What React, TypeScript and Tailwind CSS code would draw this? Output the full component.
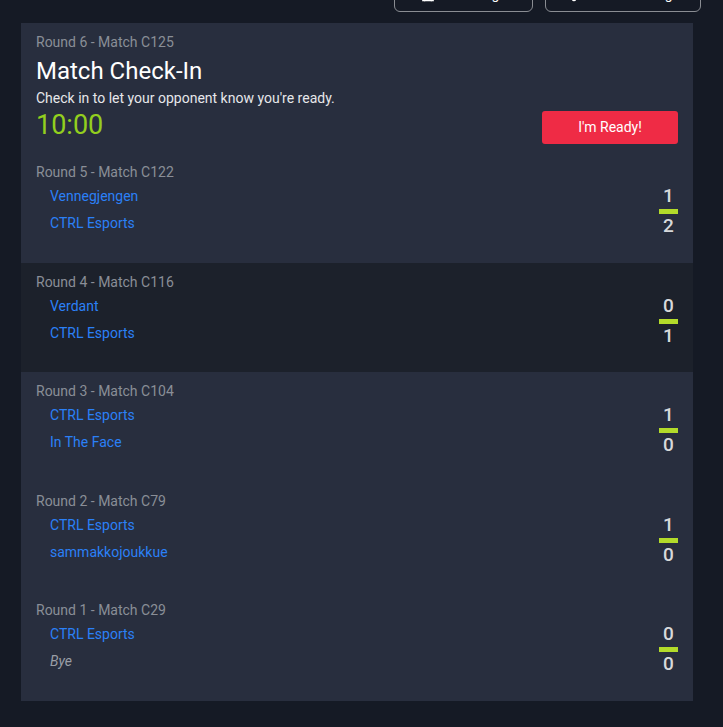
import { Settings, Trophy } from 'lucide-react'

interface Match {
  round: number
  code: string
  teams: { name: string; bye?: boolean }[]
  scores: [number, number]
  dark?: boolean
}

const matches: Match[] = [
  { round: 5, code: 'C122', teams: [{ name: 'Vennegjengen' }, { name: 'CTRL Esports' }], scores: [1, 2] },
  { round: 4, code: 'C116', teams: [{ name: 'Verdant' }, { name: 'CTRL Esports' }], scores: [0, 1], dark: true },
  { round: 3, code: 'C104', teams: [{ name: 'CTRL Esports' }, { name: 'In The Face' }], scores: [1, 0] },
  { round: 2, code: 'C79', teams: [{ name: 'CTRL Esports' }, { name: 'sammakkojoukkue' }], scores: [1, 0] },
  { round: 1, code: 'C29', teams: [{ name: 'CTRL Esports' }, { name: 'Bye', bye: true }], scores: [0, 0] },
]

function MatchRow({ m }: { m: Match }) {
  return (
    <div className={`h-[109.5px] px-[15px] pt-[9px] ${m.dark ? 'bg-[#1c212b]' : ''}`}>
      <div className="text-sm leading-5 text-[#8a8e97]">
        Round {m.round} - Match {m.code}
      </div>
      <div className="flex items-start justify-between">
        <div className="flex flex-col gap-[7px] pl-[14px] pt-[4px]">
          {m.teams.map((t, i) =>
            t.bye ? (
              <span key={i} className="text-sm leading-5 italic text-[#9a9ea6]">
                {t.name}
              </span>
            ) : (
              <a key={i} className="text-sm leading-5 text-[#2b80f7] cursor-pointer">
                {t.name}
              </a>
            )
          )}
        </div>
        <div className="flex w-[19px] flex-col items-center pt-[4px] text-[19px] font-medium leading-5 text-[#d8d9db]">
          <span>{m.scores[0]}</span>
          <span className="mt-[3px] h-[5px] w-[19px] bg-[#b3db2a]" />
          <span className="mt-[2px]">{m.scores[1]}</span>
        </div>
      </div>
    </div>
  )
}

export default function App() {
  return (
    <div
      className="min-h-screen bg-[#151a25] pl-[21px] pr-[30px]"
      style={{ fontFamily: 'Roboto, "Noto Sans", sans-serif' }}
    >
      <div className="-mr-[8px] flex h-[12px] justify-end gap-[12px]">
        <button className="-mt-[24px] flex h-[36px] w-[139px] items-center justify-center gap-2 rounded-md border border-[#8a8d93] text-sm text-white">
          <Trophy className="h-4 w-4" />
          Standings
        </button>
        <button className="-mt-[24px] flex h-[36px] w-[156px] items-center justify-center gap-2 rounded-md border border-[#8a8d93] text-sm text-white">
          <Settings className="h-4 w-4" />
          Team Settings
        </button>
      </div>

      <div className="mt-[11px] bg-[#282e3e]">
        <div className="px-[15px] pt-[9px] pb-[11px]">
          <div className="text-sm leading-5 text-[#8a8e97]">Round 6 - Match C125</div>
          <h2 className="mt-[4px] text-2xl leading-[30px] text-white">Match Check-In</h2>
          <p className="mt-[2px] text-sm leading-5 text-[#e6e7ea]">
            Check in to let your opponent know you're ready.
          </p>
          <div className="flex items-center justify-between">
            <span className="text-[27px] leading-[34px] text-[#93cf1e]">10:00</span>
            <button className="-mb-[2px] mt-[2px] h-[33px] w-[136px] rounded-[3px] bg-[#ef2b45] text-sm text-white">
              I'm Ready!
            </button>
          </div>
        </div>
        {matches.map((m) => (
          <MatchRow key={m.code} m={m} />
        ))}
      </div>
    </div>
  )
}
